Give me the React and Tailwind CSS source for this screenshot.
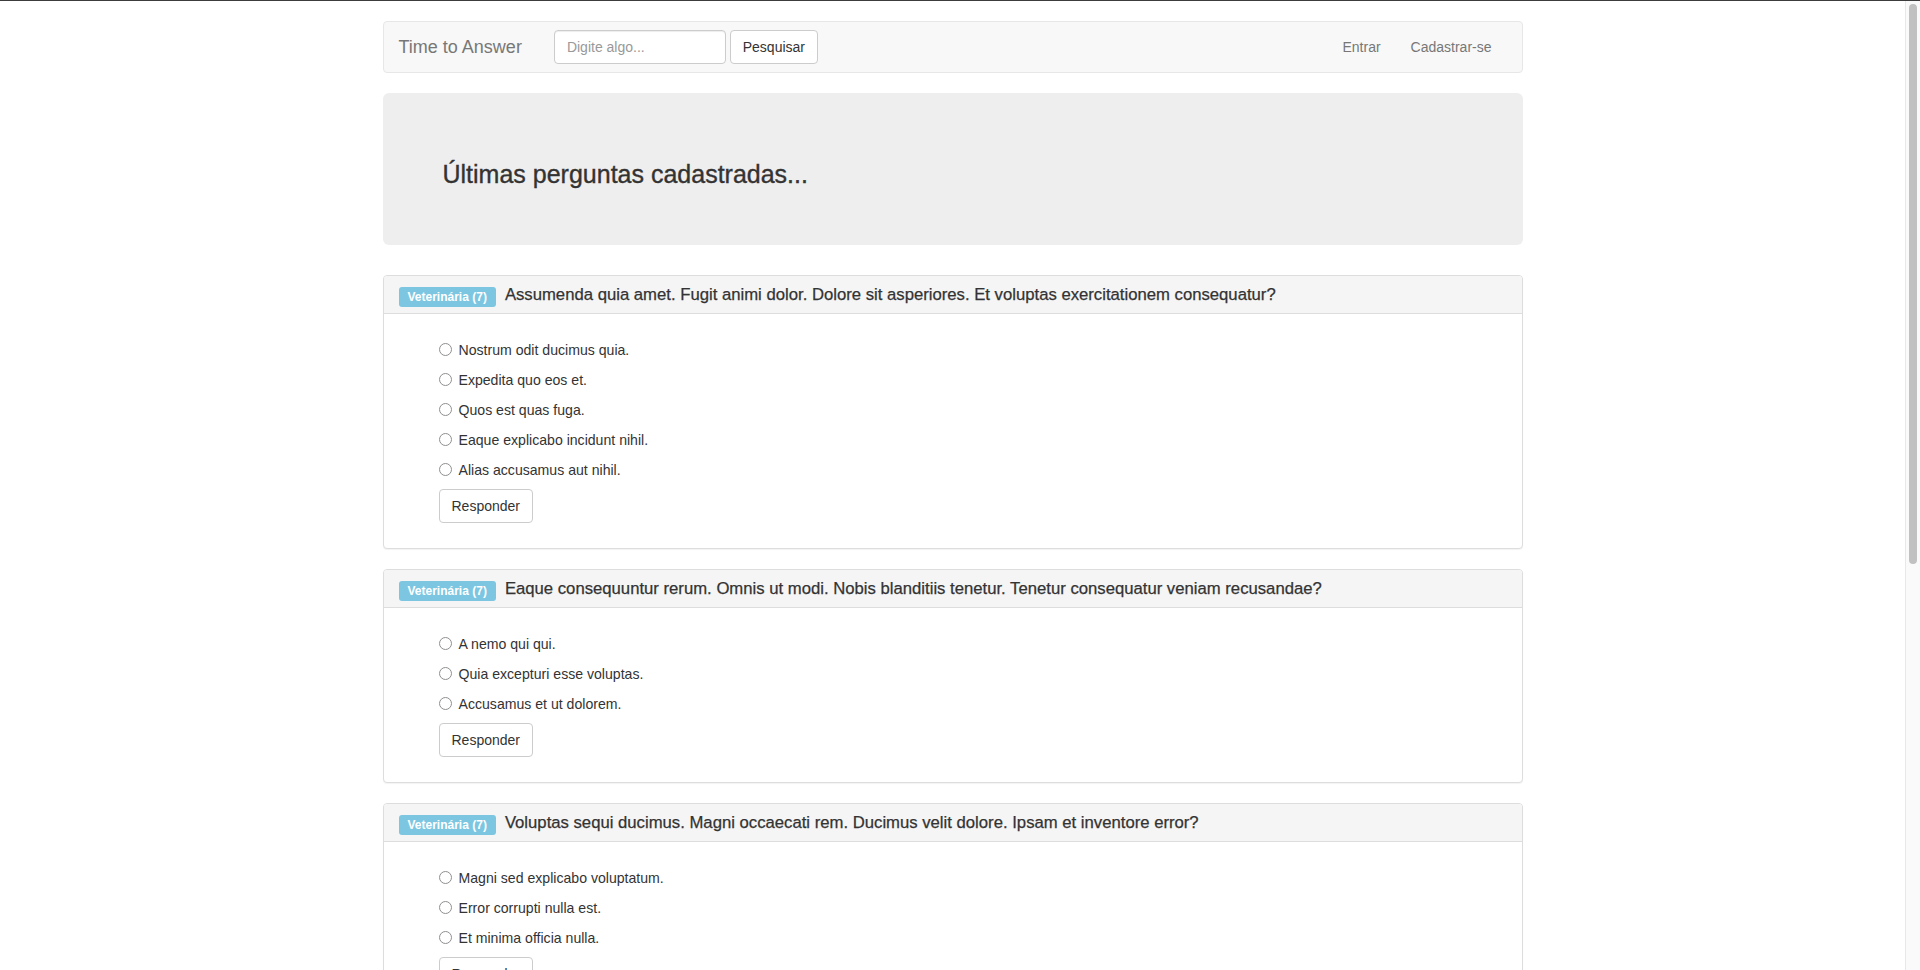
import React from "react";

const questions = [
  {
    title:
      "Assumenda quia amet. Fugit animi dolor. Dolore sit asperiores. Et voluptas exercitationem consequatur?",
    options: [
      "Nostrum odit ducimus quia.",
      "Expedita quo eos et.",
      "Quos est quas fuga.",
      "Eaque explicabo incidunt nihil.",
      "Alias accusamus aut nihil.",
    ],
  },
  {
    title:
      "Eaque consequuntur rerum. Omnis ut modi. Nobis blanditiis tenetur. Tenetur consequatur veniam recusandae?",
    options: ["A nemo qui qui.", "Quia excepturi esse voluptas.", "Accusamus et ut dolorem."],
  },
  {
    title:
      "Voluptas sequi ducimus. Magni occaecati rem. Ducimus velit dolore. Ipsam et inventore error?",
    options: ["Magni sed explicabo voluptatum.", "Error corrupti nulla est.", "Et minima officia nulla."],
  },
];

function Panel({ q, idx }) {
  return (
    <div className="mb-[20px] rounded-[4px] border border-[#ddd] bg-white shadow-[0_1px_1px_rgba(0,0,0,0.05)]">
      <div className="flex h-[38px] items-center rounded-t-[3px] border-b border-[#ddd] bg-[#f5f5f5] px-[15px]">
        <span className="mr-[9px] mt-[5px] flex h-[20px] items-center rounded-[3px] bg-[#7cc6e1] px-[9px] text-[12px] font-bold leading-none text-white">
          Veterinária (7)
        </span>
        <h3 className="whitespace-nowrap text-[16.7px] leading-[18px] text-[#333] [-webkit-text-stroke:0.25px_#333]">
          {q.title}
        </h3>
      </div>
      <div className="flex flex-col gap-[10px] py-[25px] pl-[55px] pr-[15px]">
        {q.options.map((o, i) => (
          <label key={i} className="flex h-[20px] items-center pt-px text-[14.1px] leading-[20px] text-[#333]">
            <input
              type="radio"
              name={"q" + idx}
              className="m-0 mr-[7px] h-[13px] w-[13px] appearance-none rounded-full border border-[#8f8f8f] bg-white"
            />
            {o}
          </label>
        ))}
        <div>
          <button className="h-[34px] rounded-[4px] border border-[#ccc] bg-white px-[12px] text-[14px] text-[#333]">
            Responder
          </button>
        </div>
      </div>
    </div>
  );
}

export default function App() {
  return (
    <div
      className="flex h-[970px] flex-col overflow-hidden bg-white"
      style={{ fontFamily: '"Liberation Sans", Arial, Helvetica, sans-serif' }}
    >
      <div className="h-px bg-[#3c3c3c]" />
      <div className="flex min-h-0 flex-1">
        <div className="min-w-0 flex-1 overflow-hidden">
          <div className="mx-auto w-[1140px] pt-[20px]">
            <nav className="mb-[20px] flex h-[52px] items-center rounded-[4px] border border-[#e7e7e7] bg-[#f8f8f8] px-[15px]">
              <span className="mr-[17px] text-[18px] leading-[20px] text-[#777]">Time to Answer</span>
              <div className="flex items-center gap-[4px] px-[15px]">
                <input
                  type="text"
                  placeholder="Digite algo..."
                  className="h-[34px] w-[172px] rounded-[4px] border border-[#ccc] bg-white px-[12px] text-[14px] text-[#555] shadow-[inset_0_1px_1px_rgba(0,0,0,0.075)] outline-none placeholder:text-[#999]"
                />
                <button className="h-[34px] w-[88px] rounded-[4px] border border-[#ccc] bg-white text-[14px] text-[#333]">
                  Pesquisar
                </button>
              </div>
              <div className="ml-auto flex items-center text-[14px] text-[#777]">
                <a className="px-[15px]">Entrar</a>
                <a className="pl-[15px] pr-[15px]">Cadastrar-se</a>
              </div>
            </nav>
            <div className="mb-[30px] h-[152px] rounded-[6px] bg-[#eeeeee] px-[60px] pt-[68px]">
              <h3 className="text-[25px] leading-[26px] text-[#333] [-webkit-text-stroke:0.35px_#333]">
                Últimas perguntas cadastradas...
              </h3>
            </div>
            {questions.map((q, i) => (
              <Panel key={i} q={q} idx={i} />
            ))}
          </div>
        </div>
        <div className="flex w-[15px] justify-center border-l border-[#e8e8e8] bg-[#fafafa] pt-[3px]">
          <div className="h-[560px] w-[8px] rounded-full bg-[#c1c1c1]" />
        </div>
      </div>
    </div>
  );
}
